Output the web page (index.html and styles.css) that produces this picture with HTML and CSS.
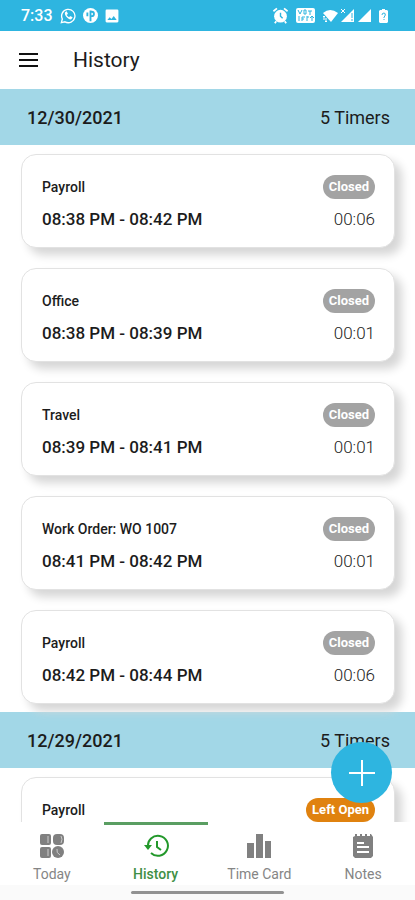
FILE: index.html
```
<!DOCTYPE html>
<html lang="en">
<head>
  <meta charset="UTF-8" />
  <meta name="viewport" content="width=device-width, initial-scale=1" />
  <title>History</title>
  <link rel="stylesheet" href="styles.css">
</head>
<body>
  <div class="status-bar">
    <div class="status-left">
      <span class="clock">7:33</span>
      <svg width="16" height="16" viewBox="0 0 24 24" fill="none" stroke="#fff" stroke-width="2">
        <path d="M2 22l1.500-5.500A10 10 0 1 1 7.500 20.700z"/>
        <path d="M8 6c-3 3 4 12 9 11l2-3-4-2-1 2c-1 0-4-3-4-4l2-1-2-4z" fill="#fff" stroke="none"/>
      </svg>
      <svg width="15" height="15" viewBox="0 0 24 24">
        <circle cx="12" cy="12" r="12" fill="#fff"/>
        <path d="M12 21V4M12 6h2a3 3 0 0 1 0 7h-2M7 7v6" fill="none" stroke="#2eb5e0" stroke-width="3"/>
      </svg>
      <svg width="14" height="14" viewBox="0 0 24 24">
        <path fill="#fff" fill-rule="evenodd" d="M3 1h18a2 2 0 0 1 2 2v18a2 2 0 0 1-2 2H3a2 2 0 0 1-2-2V3a2 2 0 0 1 2-2zM4 19h16l-5-7-4 5-3-3z"/>
      </svg>
    </div>
    <div class="status-right">
      <svg width="17" height="17" viewBox="0 0 24 24">
        <circle cx="12" cy="13" r="9" fill="#fff"/>
        <path d="M2 6l5-4M22 6l-5-4M6 20l-2 3M18 20l2 3" stroke="#fff" stroke-width="2.500"/>
        <path d="M12 8v5l3 3" fill="none" stroke="#2eb5e0" stroke-width="2"/>
      </svg>
      <svg width="19" height="15" viewBox="0 0 19 15">
        <rect width="19" height="15" rx="2" fill="#fff"/>
        <path d="M2 2l2 4 2-4M8 6V2h2v4zM12 3h4M14 3v4M3 8v5M6 13V9h3M6 11h2M11 8v5M11 9h2M16 13V8M14 10l2-2 2 2" fill="none" stroke="#2eb5e0"/>
      </svg>
      <svg width="16" height="14" viewBox="0 0 16 14">
        <path d="M1 4q7-6 15 0l-7 9z" fill="#fff"/>
        <path d="M2 7v4M1 8l1-1 1 1M4 9v4M3 12l1 1 1-1" fill="none" stroke="#fff"/>
      </svg>
      <svg width="15" height="15" viewBox="0 0 15 15">
        <path d="M1 14L14 1v13z" fill="#fff"/>
        <path d="M1 1l4 4M5 1L1 5" stroke="#fff"/>
        <path d="M12 5v5M12 11v2" stroke="#2eb5e0"/>
      </svg>
      <svg width="15" height="15" viewBox="0 0 15 15"><path d="M1 14L14 1v13z" fill="#fff"/></svg>
      <svg class="battery" width="9" height="14" viewBox="0 0 9 14">
        <path d="M3 0h3v1h2l1 1v11l-1 1H1l-1-1V2l1-1h2z" fill="#fff"/>
        <path d="M3 6q0-2 2-2t1 3l-1 1v1M5 10v1" fill="none" stroke="#2eb5e0"/>
      </svg>
    </div>
  </div>

  <header class="app-bar">
    <button class="menu-button" aria-label="Menu">
      <svg width="20" height="16" viewBox="0 0 20 16"><path d="M0 2h19M0 8h19M0 14h19" stroke="#111" stroke-width="2"/></svg>
    </button>
    <h1>History</h1>
  </header>

  <main class="history">
    <section>
      <div class="day">
        <h2>12/30/2021</h2>
        <span>5 Timers</span>
      </div>
      <ul class="timers">
        <li class="card">
          <div class="row"><span class="task">Payroll</span><span class="badge">Closed</span></div>
          <div class="row"><span class="range">08:38 PM - 08:42 PM</span><span class="total">00:06</span></div>
        </li>
        <li class="card">
          <div class="row"><span class="task">Office</span><span class="badge">Closed</span></div>
          <div class="row"><span class="range">08:38 PM - 08:39 PM</span><span class="total">00:01</span></div>
        </li>
        <li class="card">
          <div class="row"><span class="task">Travel</span><span class="badge">Closed</span></div>
          <div class="row"><span class="range">08:39 PM - 08:41 PM</span><span class="total">00:01</span></div>
        </li>
        <li class="card">
          <div class="row"><span class="task">Work Order: WO 1007</span><span class="badge">Closed</span></div>
          <div class="row"><span class="range">08:41 PM - 08:42 PM</span><span class="total">00:01</span></div>
        </li>
        <li class="card">
          <div class="row"><span class="task">Payroll</span><span class="badge">Closed</span></div>
          <div class="row"><span class="range">08:42 PM - 08:44 PM</span><span class="total">00:06</span></div>
        </li>
      </ul>
    </section>
    <section>
      <div class="day">
        <h2>12/29/2021</h2>
        <span>5 Timers</span>
      </div>
      <ul class="timers">
        <li class="card">
          <div class="row"><span class="task">Payroll</span><span class="badge badge-open">Left Open</span></div>
        </li>
      </ul>
    </section>
  </main>

  <button class="add-button" aria-label="Add timer">
    <svg width="26" height="26" viewBox="0 0 26 26"><path d="M13 0v26M0 13h26" stroke="#fff" stroke-width="2"/></svg>
  </button>

  <nav class="tabs">
    <a class="tab" href="#today">
      <svg width="26" height="26" viewBox="0 0 26 26" fill="#808080">
        <rect x="1" y="1" width="11" height="11" rx="2"/>
        <rect x="14" y="1" width="11" height="11" rx="4"/>
        <rect x="1" y="14" width="11" height="11" rx="2"/>
        <circle cx="19" cy="19" r="6"/>
        <path d="M9 3v7M22 3q2 3 0 7M9 16v7M18 16q-1 4 3 6" fill="none" stroke="#ccc"/>
      </svg>
      <span>Today</span>
    </a>
    <a class="tab active" href="#history">
      <svg width="26" height="26" viewBox="0 0 26 26" fill="none" stroke="#23982b" stroke-width="2">
        <path d="M5 14A10 10 0 1 1 8 20"/>
        <path d="M14 8v6l4 3"/>
        <path d="M1 12h8l-4 5z" fill="#23982b" stroke="none"/>
      </svg>
      <span>History</span>
    </a>
    <a class="tab" href="#time-card">
      <svg width="26" height="26" viewBox="0 0 26 26" fill="#808080"><path d="M1 10h7v15H1zM10 1h7v24h-7zM19 8h6v17h-6z"/></svg>
      <span>Time Card</span>
    </a>
    <a class="tab" href="#notes">
      <svg width="26" height="26" viewBox="0 0 26 26">
        <path d="M3 4l2-1V1h2v2h3V1h2v2h3V1h2v2h3V1h1l2 3v19l-2 2H5l-2-2z" fill="#808080"/>
        <path d="M7 10h7M7 14h12M7 19h12" stroke="#fff" stroke-width="2"/>
      </svg>
      <span>Notes</span>
    </a>
  </nav>
  <div class="gesture-bar"><span></span></div>
</body>
</html>
```
FILE: styles.css
```
* {
  box-sizing: border-box;
}
body {
  display: flex;
  flex-direction: column;
  height: 100vh;
  margin: 0;
  overflow: hidden;
  background-color: #fff;
  color: #1c1c1c;
  font-family: Roboto, sans-serif;
}
h1, h2, ul {
  margin: 0;
  padding: 0;
  font-weight: 500;
}
button {
  display: flex;
  align-items: center;
  justify-content: center;
  padding: 0;
  border: none;
  background: none;
  cursor: pointer;
}
svg {
  display: block;
  flex-shrink: 0;
}
.status-bar {
  display: flex;
  justify-content: space-between;
  align-items: center;
  flex-shrink: 0;
  height: 31px;
  padding: 0 27px 0 21px;
  background-color: #2eb5e0;
  color: #fff;
}
.status-left {
  display: flex;
  align-items: center;
  gap: 7px;
}
.status-right {
  display: flex;
  align-items: center;
  gap: 2px;
}
.status-right svg:first-child {
  margin-right: 5px;
}
.status-right svg:nth-child(2) {
  margin-right: 5px;
}
.battery {
  margin-left: 5px;
}
.clock {
  font-size: 16px;
  font-weight: 500;
}
.app-bar {
  display: flex;
  align-items: center;
  flex-shrink: 0;
  gap: 34px;
  height: 58px;
  padding: 0 19px;
}
.app-bar h1 {
  font-size: 21px;
  font-weight: 400;
}
.history {
  flex: 1;
  min-height: 0;
  overflow: hidden;
}
.day {
  display: flex;
  justify-content: space-between;
  align-items: center;
  height: 56px;
  padding: 0 25px 0 27px;
  background-color: #a2d7e7;
  font-size: 18px;
}
.day h2 {
  font-size: 18px;
}
.timers {
  display: flex;
  flex-direction: column;
  gap: 20px;
  padding: 9px 20px 8px 21px;
  list-style: none;
}
.card {
  display: flex;
  flex-direction: column;
  gap: 8px;
  height: 94px;
  padding: 20px 19px 0 20px;
  border: 1px solid #e2e2e2;
  border-radius: 15px;
  background-color: #fff;
  box-shadow: 7px 7px 10px #d6d6d6;
}
.row {
  display: flex;
  justify-content: space-between;
  align-items: center;
  height: 24px;
}
.task {
  font-size: 14px;
  font-weight: 500;
}
.range {
  font-size: 17px;
  font-weight: 500;
}
.total {
  font-size: 17px;
  font-weight: 300;
}
.badge {
  padding: 0 6px;
  border-radius: 12px;
  background-color: #a3a3a3;
  color: #fff;
  font-size: 13px;
  font-weight: 700;
  line-height: 24px;
}
.badge-open {
  background-color: #e0820f;
}
.add-button {
  position: absolute;
  right: 23px;
  bottom: 97px;
  width: 61px;
  height: 61px;
  border-radius: 50%;
  background-color: #2eb5e0;
}
.tabs {
  display: flex;
  flex-shrink: 0;
  height: 63px;
  background-color: #fff;
}
.tab {
  display: flex;
  flex: 1;
  flex-direction: column;
  align-items: center;
  gap: 7px;
  padding-top: 8px;
  border-top: 3px solid transparent;
  color: #858585;
  font-size: 14px;
  text-decoration: none;
}
.active {
  border-top-color: #5a9e62;
  color: #3f8f45;
  font-weight: 500;
}
.gesture-bar {
  display: flex;
  flex-shrink: 0;
  justify-content: center;
  height: 15px;
  padding-top: 6px;
  background-color: #fafafa;
}
.gesture-bar span {
  width: 37%;
  height: 3px;
  border-radius: 2px;
  background-color: #929292;
}
```
